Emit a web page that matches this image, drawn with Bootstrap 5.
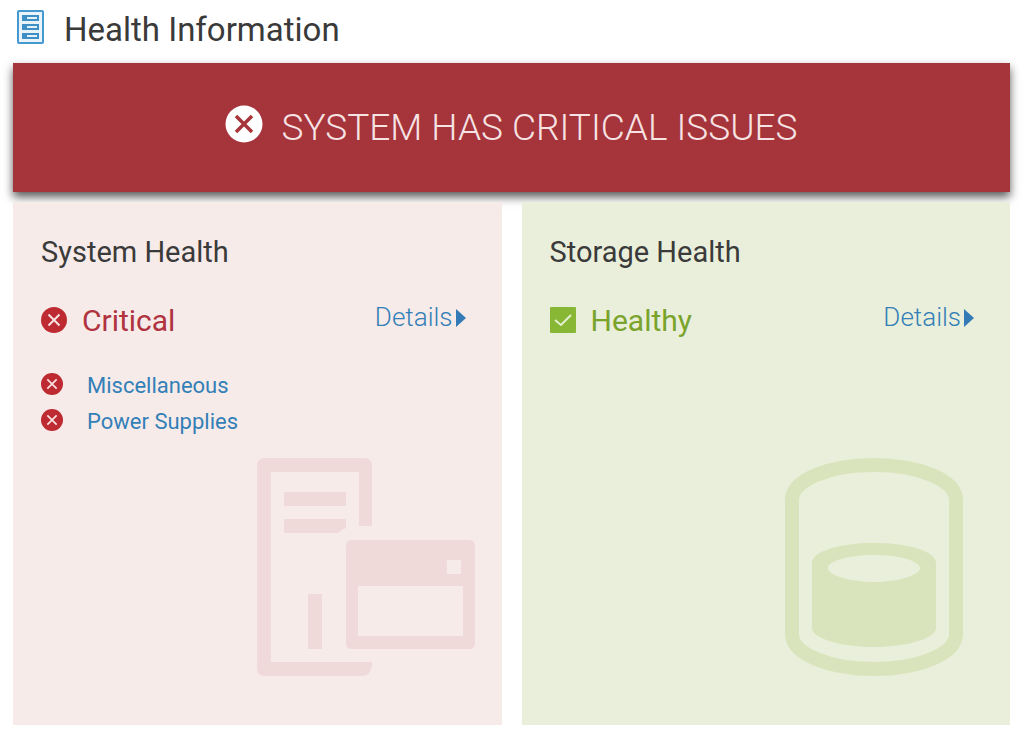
<!DOCTYPE html>
<html lang="en">
<head>
<meta charset="utf-8">
<meta name="viewport" content="width=device-width, initial-scale=1">
<title>Health Information</title>
<link href="https://cdn.jsdelivr.net/npm/bootstrap@5.3.0/dist/css/bootstrap.min.css" rel="stylesheet">
<style>
  body { font-family: Roboto, "Liberation Sans", sans-serif; color: #3a3a3a; background: #fff; }
  a { color: #337fb7; text-decoration: none; }
  a:hover { text-decoration: underline; }
  .page { padding: 0 14px 12px 13px; }
  .page-head { height: 63px; padding: 10px 4px 0; gap: 20px; }
  .page-title { font-size: 33px; line-height: 40px; font-weight: 400; }
  .status-banner { background: #a6343b; color: #f6e3e4; height: 129px; padding-bottom: 4px; gap: 18px; box-shadow: 0 5px 9px rgba(0,0,0,.65); margin-bottom: 10px; }
  .status-text { font-size: 37px; line-height: 44px; font-weight: 300; padding-top: 4px; }
  .panels { gap: 20px; position: relative; }
  .panel { flex: 1 1 0; min-width: 280px; min-height: 523px; padding: 30px 27px 49px 28px; }
  .panel-critical { background: #f7ebe9; }
  .panel-healthy { background: #eaefdb; }
  .panel-title { font-size: 29px; line-height: 40px; font-weight: 400; }
  .status-row { margin-top: 29px; padding-right: 9px; }
  .status-label { font-size: 30px; line-height: 40px; gap: 15px; }
  .status-label svg { margin-bottom: 2px; }
  .text-critical { color: #b0333f; }
  .text-healthy { color: #7aa32c; }
  .details { font-size: 26px; line-height: 32px; font-weight: 300; gap: 3px; }
  .details svg { margin-top: 2px; }
  .issues { margin-top: 27px; }
  .issues li { font-size: 22px; line-height: 36px; gap: 24px; }
  .issues svg { margin-bottom: 4px; }
  .panel-healthy .art { margin-right: 20px; }
</style>
</head>
<body>
<svg class="d-none" aria-hidden="true">
  <symbol id="cross" viewBox="0 0 26 26"><circle cx="13" cy="13" r="13" fill="#be2a31"/><path d="M7.5 7.5l11 11M18.500 7.500L7.500 18.500" stroke="#f7e4e2" stroke-width="2"/></symbol>
  <symbol id="caret" viewBox="0 0 10 18"><path d="M0 0l10 9-10 9z" fill="#337ab7"/></symbol>
</svg>
<main class="page">
  <header class="page-head d-flex align-items-start">
    <svg width="27" height="34" viewBox="0 0 27 34" aria-hidden="true">
      <rect x="1" y="1" width="25" height="32" rx="1" fill="#e9f3f9" stroke="#4599d0" stroke-width="2"/>
      <g fill="#e4f1f8" stroke="#3d8fc6" stroke-width="2"><path d="M6 6h15v4H6zM6 15h15v4H6zM6 24h15v4H6z"/></g>
      <path d="M5 5h5v6H5zM5 14h5v6H5zM5 23h5v6H5z" fill="#3d8fc6"/>
    </svg>
    <h1 class="page-title mb-0">Health Information</h1>
  </header>

  <section class="status-banner d-flex justify-content-center align-items-center">
    <svg class="mb-1" width="38" height="38" viewBox="0 0 38 38" aria-hidden="true"><circle cx="19" cy="19" r="18.500" fill="#fff"/><path d="M11 11l16 16M27 11L11 27" stroke="#a6343b" stroke-width="3.500"/></svg>
    <span class="status-text">SYSTEM HAS CRITICAL ISSUES</span>
  </section>

  <div class="panels d-flex flex-wrap">
    <section class="panel panel-critical d-flex flex-column">
      <h2 class="panel-title mb-0">System Health</h2>
      <div class="status-row d-flex justify-content-between align-items-start">
        <div class="status-label text-critical d-flex align-items-center">
          <svg width="26" height="26" aria-hidden="true"><use href="#cross"/></svg>
          <span>Critical</span>
        </div>
        <a href="#" class="details d-flex align-items-center">Details<svg width="10" height="18" aria-hidden="true"><use href="#caret"/></svg></a>
      </div>
      <ul class="issues list-unstyled mb-0">
        <li class="d-flex align-items-center"><svg width="22" height="22" aria-hidden="true"><use href="#cross"/></svg><a href="#">Miscellaneous</a></li>
        <li class="d-flex align-items-center"><svg width="22" height="22" aria-hidden="true"><use href="#cross"/></svg><a href="#">Power Supplies</a></li>
      </ul>
      <svg class="art mt-auto ms-auto" width="218" height="218" viewBox="0 0 218 218" fill="#f0d9d9" aria-hidden="true">
        <path d="M8 0h99q8 0 8 8v60h-13V14H14v190h101v4q-2 10-10 10H8q-8 0-8-8V8q0-8 8-8z"/>
        <path d="M28 34h60q1 0 1 1v12q0 1-1 1H28q-1 0-1-1V35q0-1 1-1zM28 61h60q1 0 1 1v8q-4 1-8 5H28q-1 0-1-1V62q0-1 1-1zM51 136h14v55H51z"/>
        <path fill-rule="evenodd" d="M95 82h117q6 0 6 6v97q0 6-6 6H95q-6 0-6-6V88q0-6 6-6zM190 102v14h14v-14zM102 128q-1 0-1 1v48q0 1 1 1h103q1 0 1-1v-48q0-1-1-1z"/>
      </svg>
    </section>

    <section class="panel panel-healthy d-flex flex-column">
      <h2 class="panel-title mb-0">Storage Health</h2>
      <div class="status-row d-flex justify-content-between align-items-start">
        <div class="status-label text-healthy d-flex align-items-center">
          <svg width="26" height="26" viewBox="0 0 26 26" aria-hidden="true"><rect width="26" height="26" rx="1" fill="#88b736"/><path d="M5 13l6 5L21 8" fill="none" stroke="#e4efcf" stroke-width="2"/></svg>
          <span>Healthy</span>
        </div>
        <a href="#" class="details d-flex align-items-center">Details<svg width="10" height="18" aria-hidden="true"><use href="#caret"/></svg></a>
      </div>
      <svg class="art mt-auto ms-auto" width="178" height="218" viewBox="0 0 178 218" aria-hidden="true">
        <path d="M7 42C7 22 44 7 89 7s82 15 82 35v134c0 20-37 35-82 35S7 196 7 176z" fill="none" stroke="#d9e4bc" stroke-width="14"/>
        <path fill="#d9e4bc" fill-rule="evenodd" d="M27 105c0-12 28-20 62-20s62 8 62 20v65c0 10-28 19-62 19s-62-9-62-19zM43 110c0 7 21 14 46 14s46-7 46-14-21-13-46-13-46 6-46 13z"/>
      </svg>
    </section>
  </div>
</main>
<script src="https://cdn.jsdelivr.net/npm/bootstrap@5.3.0/dist/js/bootstrap.bundle.min.js"></script>
</body>
</html>
